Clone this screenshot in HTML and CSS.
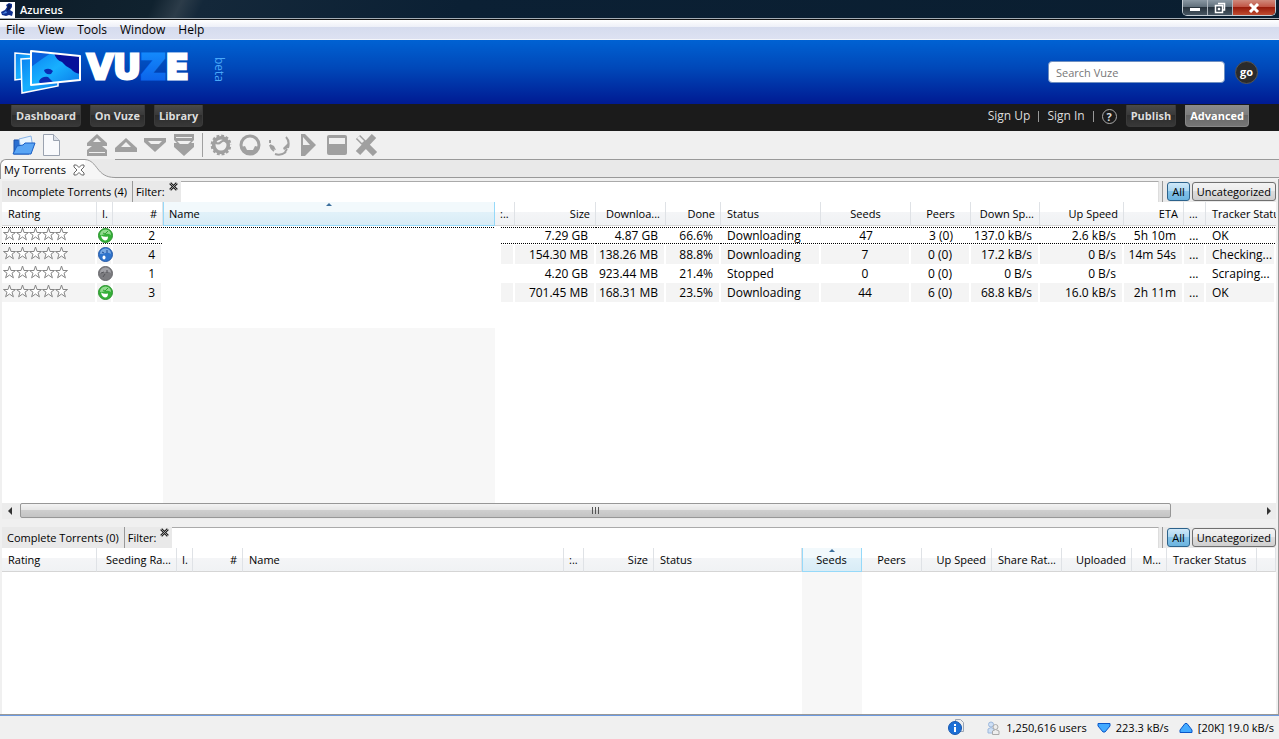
FILE: index.html
```html
<!DOCTYPE html>
<html lang="en">

<head>
    <meta charset="UTF-8">
    <meta name="viewport" content="width=device-width, initial-scale=1.0">
    <title>Azureus</title>
    <link rel="stylesheet" href="styles.css">
</head>
<body>
    <svg class="defs" width="0" height="0">
        <symbol id="star" viewBox="0 0 13 14"><path d="M6.500 1L8 5.500h4.500L9 8.200l1.400 4.600L6.500 10l-3.900 2.800L4 8.200.500 5.500H5z" fill="#fff" stroke="#858585"/></symbol>
        <symbol id="stars" viewBox="0 0 65 14">
            <use href="#star" width="13" height="14"/>
            <use href="#star" x="13" width="13" height="14"/>
            <use href="#star" x="26" width="13" height="14"/>
            <use href="#star" x="39" width="13" height="14"/>
            <use href="#star" x="52" width="13" height="14"/>
        </symbol>
        <symbol id="green" viewBox="0 0 15 15"><circle cx="7.500" cy="7.500" r="7" fill="#35b038" stroke="#2a932d"/><path d="M2 7q0-5 5.500-5.500Q13 2 13 7q-3-2-5.500-1T2 7z" fill="#93db90"/><path d="M5 5l2 1 3-3" fill="none" stroke="#2fa032"/><path d="M3 7.500q3 2 7 1 0 4-3 4-3-.500-4-5z" fill="#fff"/></symbol>
        <symbol id="blue" viewBox="0 0 15 15"><circle cx="7.500" cy="7.500" r="7" fill="#2f74cc" stroke="#2459a6"/><path d="M2 7q0-5 5.500-5.500Q13 2 13 7q-3-2-5.500-1T2 7z" fill="#79a9e2"/><path d="M4 5l2 1M9 6V3" stroke="#1c4d9a"/><ellipse cx="6" cy="10.500" rx="1.500" ry="2" fill="#fff"/></symbol>
        <symbol id="gray" viewBox="0 0 15 15"><circle cx="7.500" cy="7.500" r="7" fill="#7b7b7f" stroke="#68686c"/><path d="M2 7q0-5 5.500-5.500Q13 2 13 7q-3-2-5.500-1T2 7z" fill="#a3a3a8"/><path d="M3 7l3-1M9 7V4M5 11l2-3" stroke="#55555a"/></symbol>
        <symbol id="clear" viewBox="0 0 8 8"><path d="M1 1l6 6M7 1L1 7" stroke="#222" stroke-width="2.500"/><path d="M1 1l6 6M7 1L1 7" stroke="#aaa" stroke-width=".8"/></symbol>
    </svg>

    <header class="titlebar">
        <svg class="app-icon" viewBox="0 0 15 16"><path fill="#fff" d="M0 0h15v16H0z"/><path d="M6 3l3-2 3 1v3l-2 3 3 2-1 4-3-1-3 1-4-1-1-3 4-2 2-3z" fill="#10308f"/><path d="M8 2l3 1-1 4-3 2z" fill="#081850"/><path d="M2 12l4-3 1 2z" fill="#4b86e0"/></svg>
        <span class="title">Azureus</span>
        <div class="win-buttons">
            <button aria-label="Minimize"><svg width="12" height="10"><path d="M1 5h10v3H1z" fill="#fff"/></svg></button>
            <button aria-label="Restore"><svg width="12" height="12"><path d="M4 1.500h6.500V8H9M1.500 3.500h7v7h-7zM4.500 6.500h1v1h-1z" fill="none" stroke="#fff" stroke-width="1.500"/></svg></button>
            <button class="win-close" aria-label="Close"><svg width="12" height="10"><path d="M2 1l8 8M10 1L2 9" stroke="#fff" stroke-width="3"/></svg></button>
        </div>
    </header>

    <nav class="menu">
        <a href="#">File</a>
        <a href="#">View</a>
        <a href="#">Tools</a>
        <a href="#">Window</a>
        <a href="#">Help</a>
    </nav>

    <div class="banner">
        <svg class="logo" width="216" height="48" viewBox="0 0 216 48">
            <defs>
                <linearGradient id="glass" x1="0" y1="0" x2="1" y2="1"><stop offset="0" stop-color="#0a80f0"/><stop offset=".5" stop-color="#18b0ff"/><stop offset="1" stop-color="#0a78e8"/></linearGradient>
                <linearGradient id="zed" x1="0" y1="0" x2="0" y2="1"><stop offset="0" stop-color="#1591ff"/><stop offset="1" stop-color="#0a5be6"/></linearGradient>
            </defs>
            <path d="M1 5l22 2v22L1 32z" fill="url(#glass)" stroke="#fff" stroke-width="1.500"/>
            <path d="M7 11l37-2v29L8 45z" fill="url(#glass)" stroke="#fff" stroke-width="1.500"/>
            <path d="M17 3l49 5v24l-49 5z" fill="url(#glass)"/>
            <path d="M40 5l26 3v18q-6-1-9-5-6-3-9-7-6-2-8-9z" fill="#07109a"/>
            <path d="M17 3l20 2-9 6-11 8z" fill="#0860dc"/>
            <path d="M30 22q5-3 9 1l-2 3q-6 1-7-4zM25 33q3-5 9-4l5 5-13 2z" fill="#0a2cb4"/>
            <path d="M17 3l49 5v24l-49 5z" fill="none" stroke="#fff" stroke-width="2" stroke-linejoin="round"/>
            <text class="wordmark" x="73" y="31">VU<tspan fill="url(#zed)" stroke="url(#zed)">Z</tspan>E</text>
            <text class="beta" transform="translate(201 9) rotate(90)">beta</text>
        </svg>
        <form class="search">
            <input type="text" placeholder="Search Vuze" aria-label="Search Vuze">
            <button type="button">go</button>
        </form>
    </div>

    <nav class="nav">
        <button>Dashboard</button>
        <button>On Vuze</button>
        <button>Library</button>
        <div class="account">
            <a href="#">Sign Up</a>
            <i></i>
            <a href="#">Sign In</a>
            <i></i>
            <a class="help" href="#">?</a>
        </div>
        <button>Publish</button>
        <button class="active">Advanced</button>
    </nav>

    <div class="toolbar">
        <button aria-label="Open torrent"><svg width="24" height="22"><path d="M2 6h6l2 2h7v12H2z" fill="#2a6fd0" stroke="#1b4fa6"/><path d="M7 5l12-3 2 12-12 2z" fill="#eaf5ff" stroke="#8ab4e6"/><path d="M1 20l4-8 6-1 2-2h10l-4 11z" fill="#5aa5f4" stroke="#1b5fc4"/></svg></button>
        <button aria-label="New torrent"><svg width="24" height="22"><path d="M2.500.500h10l6 6v15h-16z" fill="#f8f9fc" stroke="#9aa2b0"/><path d="M12.500.500v6h6" fill="#dde2ea" stroke="#9aa2b0"/></svg></button>
        <span class="space"></span>
        <button disabled aria-label="Top"><svg width="24" height="22"><path d="M12 0l10 9v3H2V9z"/><path d="M12 8l10 8v6H2v-6z"/><path d="M8 8l4-4 4 4zM4 18h16v1H4z" fill="#f0f0f0"/></svg></button>
        <button disabled aria-label="Up"><svg width="24" height="22"><path d="M12 4l11 10v4H1v-4z"/><path d="M7 13l5-5 5 5z" fill="#f0f0f0"/></svg></button>
        <button disabled aria-label="Down"><svg width="24" height="22"><path d="M1 4h22v4L12 18 1 8z"/><path d="M5 7h14l-3 3H8z" fill="#f0f0f0"/></svg></button>
        <button disabled aria-label="Bottom"><svg width="24" height="22"><path d="M2 0h20v6l-3 3h3v4l-10 9-10-9V9h3L2 6z"/><path d="M4 3h16v1H4zM5 7h14l-3 3H8z" fill="#f0f0f0"/></svg></button>
        <span class="line"></span>
        <button disabled aria-label="Run"><svg width="24" height="22"><circle cx="12" cy="11" r="8" fill="none" stroke="#a0a0a0" stroke-width="5"/><circle cx="12" cy="11" r="10" fill="none" stroke="#f0f0f0" stroke-width="2" stroke-dasharray="2 3"/><path d="M6 8q3 3 6 0t6 1" fill="none" stroke="#a0a0a0" stroke-width="2"/></svg></button>
        <button disabled aria-label="Host"><svg width="24" height="22"><circle cx="12" cy="11" r="9" fill="none" stroke="#a0a0a0" stroke-width="3"/><path d="M3 13l4-1 2 4h6l2-4 4 1-3 6-5 2h-3l-4-2z"/></svg></button>
        <button disabled aria-label="Publish torrent"><svg width="24" height="22"><path d="M3 10l4 2 2 4-4-1zM21 9v5l-4 2-1-2z"/><path d="M3 11q1 4 4 6M8 20q6 2 11-2M19 3q4 4 2 11M3 6v3M20 15l-2 3" fill="none" stroke="#a0a0a0" stroke-width="2"/></svg></button>
        <button disabled aria-label="Start"><svg width="24" height="22"><path d="M5 0h4l11 11L9 22H5z"/><path d="M7 3l7 8H7z" fill="#f0f0f0"/></svg></button>
        <button disabled aria-label="Stop"><svg width="24" height="22"><rect x="2" y="1" width="20" height="20" rx="2"/><path d="M4 4h16v6H4z" fill="#f0f0f0"/></svg></button>
        <button disabled aria-label="Remove"><svg width="24" height="22"><path d="M4 3l17 17M20 2L4 19" stroke="#a0a0a0" stroke-width="6"/><path d="M4 3l5 5" stroke="#f0f0f0" stroke-width="3"/></svg></button>
    </div>

    <div class="tabs">
        <button class="tab">My Torrents <svg width="12" height="12"><path d="M1 1h2.500L6 3.500 8.500 1H11v2L8 6l3 3v2H8.500L6 8.500 3.500 11H1V9l3-3-3-3z" fill="#fff" stroke="#666"/></svg></button>
        <svg class="curve" width="30" height="20"><path d="M0 0h30v20H0z" fill="#f6f6f6"/><path d="M30 0H0c13 1 11 18 30 18.500z" fill="#e9e9e9"/><path d="M0 .500c13 1 11 18 30 18" fill="none" stroke="#999"/></svg>
        <span class="tab-rest"></span>
    </div>

    <main class="panes">
        <section class="pane incomplete">
            <div class="filter">
                <h2>Incomplete Torrents (4)</h2>
                <label for="filter1">Filter:</label>
                <button class="clear" aria-label="Clear"><svg width="9" height="9"><use href="#clear"/></svg></button>
                <input id="filter1" type="text">
                <div class="cats"><button class="on">All</button><button>Uncategorized</button></div>
            </div>
            <div class="scroll">
                <table>
                    <colgroup><col class="w95"><col class="w16"><col class="w50"><col class="w332"><col class="w20"><col class="w81"><col class="w70"><col class="w55"><col class="w100"><col class="w90"><col class="w60"><col class="w69"><col class="w84"><col class="w60"><col class="w22"><col></colgroup>
                    <thead>
                        <tr><th>Rating</th><th class="tiny">I.</th><th class="r">#</th><th class="sorted">Name</th><th class="tiny">:..</th><th class="r">Size</th><th class="r">Downloa...</th><th class="r">Done</th><th>Status</th><th class="c">Seeds</th><th class="c">Peers</th><th class="r">Down Sp...</th><th class="r">Up Speed</th><th class="r">ETA</th><th class="tiny">...</th><th class="last">Tracker Status</th></tr>
                    </thead>
                    <tbody>
                        <tr class="selected"><td class="rating"><svg width="65" height="14"><use href="#stars"/></svg></td><td class="ic"><svg width="15" height="15"><use href="#green"/></svg></td><td class="r">2</td><td class="name"></td><td class="cat"></td><td class="r">7.29 GB</td><td class="r">4.87 GB</td><td class="r">66.6%</td><td>Downloading</td><td class="c">47</td><td class="c">3 (0)</td><td class="r">137.0 kB/s</td><td class="r">2.6 kB/s</td><td class="r">5h 10m</td><td class="tiny">...</td><td>OK</td></tr>
                        <tr><td class="rating"><svg width="65" height="14"><use href="#stars"/></svg></td><td class="ic"><svg width="15" height="15"><use href="#blue"/></svg></td><td class="r">4</td><td class="name"></td><td class="cat"></td><td class="r">154.30 MB</td><td class="r">138.26 MB</td><td class="r">88.8%</td><td>Downloading</td><td class="c">7</td><td class="c">0 (0)</td><td class="r">17.2 kB/s</td><td class="r">0 B/s</td><td class="r">14m 54s</td><td class="tiny">...</td><td>Checking...</td></tr>
                        <tr><td class="rating"><svg width="65" height="14"><use href="#stars"/></svg></td><td class="ic"><svg width="15" height="15"><use href="#gray"/></svg></td><td class="r">1</td><td class="name"></td><td class="cat"></td><td class="r">4.20 GB</td><td class="r">923.44 MB</td><td class="r">21.4%</td><td>Stopped</td><td class="c">0</td><td class="c">0 (0)</td><td class="r">0 B/s</td><td class="r">0 B/s</td><td class="r"></td><td class="tiny">...</td><td>Scraping...</td></tr>
                        <tr><td class="rating"><svg width="65" height="14"><use href="#stars"/></svg></td><td class="ic"><svg width="15" height="15"><use href="#green"/></svg></td><td class="r">3</td><td class="name"></td><td class="cat"></td><td class="r">701.45 MB</td><td class="r">168.31 MB</td><td class="r">23.5%</td><td>Downloading</td><td class="c">44</td><td class="c">6 (0)</td><td class="r">68.8 kB/s</td><td class="r">16.0 kB/s</td><td class="r">2h 11m</td><td class="tiny">...</td><td>OK</td></tr>
                        <tr class="blank"><td colspan="16"></td></tr>
                        <tr class="rest"><td colspan="3"></td><td class="shade"></td><td colspan="12"></td></tr>
                    </tbody>
                </table>
            </div>
            <div class="hbar">
                <button aria-label="Scroll left"><svg width="18" height="16"><path d="M10 4v8L6 8z" fill="#333"/></svg></button>
                <div class="track"><div class="thumb"><i></i><i></i><i></i></div></div>
                <button aria-label="Scroll right"><svg width="18" height="16"><path d="M9 4v8l4-4z" fill="#333"/></svg></button>
            </div>
        </section>

        <section class="pane complete">
            <div class="filter">
                <h2>Complete Torrents (0)</h2>
                <label for="filter2">Filter:</label>
                <button class="clear" aria-label="Clear"><svg width="9" height="9"><use href="#clear"/></svg></button>
                <input id="filter2" type="text">
                <div class="cats"><button class="on">All</button><button>Uncategorized</button></div>
            </div>
            <div class="scroll">
                <table>
                    <colgroup><col class="w95"><col class="w80"><col class="w16"><col class="w50"><col class="w321"><col class="w20"><col class="w70"><col class="w148"><col class="w60"><col class="w60"><col class="w70"><col class="w70"><col class="w70"><col class="w35"><col class="w90"><col></colgroup>
                    <thead>
                        <tr><th>Rating</th><th class="r">Seeding Ra...</th><th class="tiny">I.</th><th class="r">#</th><th>Name</th><th class="tiny">:..</th><th class="r">Size</th><th>Status</th><th class="c sorted">Seeds</th><th class="c">Peers</th><th class="r">Up Speed</th><th class="r">Share Rat...</th><th class="r">Uploaded</th><th class="r">M...</th><th>Tracker Status</th><th></th></tr>
                    </thead>
                    <tbody>
                        <tr class="rest"><td colspan="8"></td><td class="shade"></td><td colspan="7"></td></tr>
                    </tbody>
                </table>
            </div>
        </section>
    </main>

    <footer class="status">
        <svg class="info" width="17" height="17"><path d="M7.500.500h5l3 3v9h-8z" fill="#eee" stroke="#9aa5b5"/><circle cx="7" cy="9" r="6.500" fill="#1c6fd6" stroke="#1858b0"/><path d="M6 5h2v2H6zM6 8h2v5H6z" fill="#fff"/></svg>
        <svg class="users" width="13" height="14"><circle cx="4" cy="3.500" r="2.500" fill="#cfe0f5" stroke="#9db8dc"/><path d="M1 12V8q3-3 6 0v4z" fill="#cfe0f5" stroke="#9db8dc"/><circle cx="8.500" cy="6" r="2.500" fill="#eee" stroke="#aaa"/><path d="M5.500 13.500V10q3-3 6.500 0v3.500z" fill="#eee" stroke="#aaa"/></svg>
        <span>1,250,616 users</span>
        <svg class="rate" width="14" height="12"><path d="M1 1.500h12V4l-5 6H6L1 4z" fill="#43aaff" stroke="#0a56c8"/></svg>
        <span>223.3 kB/s</span>
        <svg class="rate" width="14" height="12"><path d="M1 10.500V8l5-6.500h2L13 8v2.500z" fill="#43aaff" stroke="#0a56c8"/></svg>
        <span>[20K] 19.0 kB/s</span>
    </footer>
</body>
</html>
```
FILE: styles.css
```css
* {
    box-sizing: border-box;
}
body {
    margin: 0;
    height: 100vh;
    display: flex;
    flex-direction: column;
    overflow: hidden;
    background: #f0f0f0;
    color: #000;
    font: 12px/16px "Open Sans", "Noto Sans", sans-serif;
}
button,
input {
    margin: 0;
    padding: 0;
    border: 0;
    background: none;
    color: inherit;
    font: inherit;
}
a {
    color: inherit;
    text-decoration: none;
}
svg {
    display: block;
}
.defs {
    position: absolute;
}

/* window frame */
.titlebar {
    flex: none;
    display: flex;
    align-items: center;
    height: 20px;
    padding-right: 3px;
    border-bottom: 1px solid #111;
    box-shadow: inset 0 -1px #a4adb5;
    background: linear-gradient(115deg, #0d1c29 0, #10222f 140px, #2c3c49 165px, #14283a 185px, #0b2034 420px, #0a1e30 100%);
    color: #fff;
}
.app-icon {
    width: 15px;
    height: 16px;
}
.title {
    margin-left: 5px;
    font-size: 11px;
    font-weight: 600;
}
.win-buttons {
    display: flex;
    align-self: flex-start;
    height: 16px;
    margin-left: auto;
    border: 1px solid #c5cdd4;
    border-top: 0;
    border-radius: 0 0 5px 5px;
    overflow: hidden;
}
.win-buttons button {
    display: flex;
    align-items: center;
    justify-content: center;
    width: 25px;
    border-right: 1px solid #b0b8bf;
    background: linear-gradient(#8a98a3, #5d6c78 50%, #27333d 50%, #485662);
}
.win-buttons .win-close {
    width: 42px;
    border: 0;
    background: linear-gradient(#d08a7c, #c05040 50%, #981c0c 50%, #c04c30);
}
.menu {
    flex: none;
    display: flex;
    gap: 13px;
    height: 20px;
    padding: 2px 6px;
    border-bottom: 1px solid #f4f6fb;
    background: linear-gradient(#fff, #eef0f8 35%, #d5dbee 35%, #dde2f2);
}

/* banner */
.banner {
    flex: none;
    display: flex;
    align-items: center;
    justify-content: space-between;
    height: 64px;
    padding: 0 21px 0 14px;
    background: linear-gradient(#0062d3, #0047b8 45%, #001a92);
}
.wordmark {
    fill: #fff;
    stroke: #fff;
    stroke-width: 3px;
    font: bold 34px "DejaVu Sans", sans-serif;
}
.beta {
    fill: #4aa8f8;
    font: 12px "Open Sans", sans-serif;
}
.search {
    display: flex;
    align-items: center;
    gap: 10px;
}
.search input {
    width: 177px;
    height: 22px;
    padding: 0 7px;
    border: 1px solid #6f8fc0;
    border-radius: 4px;
    background: #fff;
    font-size: 11px;
}
.search input::placeholder {
    color: #777;
}
.search button {
    width: 23px;
    height: 23px;
    border: 1px solid #555;
    border-radius: 50%;
    background: #2b2b2b;
    color: #fff;
    font-size: 11px;
    font-weight: bold;
    line-height: 16px;
}
.nav {
    flex: none;
    display: flex;
    gap: 9px;
    height: 27px;
    padding: 1px 30px 4px 11px;
    background: #1b1b1b;
    color: #ddd;
}
.nav button {
    padding: 0 4px;
    border: 1px solid #3a3a3a;
    border-top: 0;
    border-radius: 0 0 4px 4px;
    background: linear-gradient(#4a4a4a, #383838 50%, #2c2c2c 50%, #383838);
    font-size: 11px;
    font-weight: bold;
}
.nav .active {
    border-color: #888;
    background: linear-gradient(#8c8c8c, #7c7c7c 50%, #686868 50%, #767676);
    color: #fff;
}
.account {
    display: flex;
    align-items: center;
    gap: 8px;
    margin-left: auto;
}
.account i {
    width: 1px;
    height: 11px;
    background: #999;
}
.account .help {
    width: 15px;
    height: 15px;
    border: 1px solid #aaa;
    border-radius: 50%;
    font-size: 11px;
    font-weight: bold;
    line-height: 13px;
    text-align: center;
}

/* toolbar and tabs */
.toolbar {
    flex: none;
    display: flex;
    align-items: center;
    gap: 5px;
    height: 28px;
    padding-left: 12px;
}
.toolbar svg {
    fill: #a0a0a0;
}
.toolbar .space {
    width: 10px;
}
.toolbar .line {
    width: 1px;
    height: 24px;
    margin: 0 1px;
    background: #a0a0a0;
}
.tabs {
    flex: none;
    display: flex;
    height: 20px;
}
.tab {
    display: flex;
    align-items: center;
    gap: 7px;
    padding-left: 3px;
    border-top: 1px solid #999;
    border-left: 1px solid #999;
    border-radius: 6px 0 0;
    background: linear-gradient(#fff, #f4f4f4);
    font-size: 11px;
}
.tab-rest {
    flex: 1;
    height: 19px;
    border-top: 1px solid #999;
    border-bottom: 1px solid #999;
    background: #e9e9e9;
}
.curve {
    border-top: 0;
}

/* torrent lists */
.panes {
    flex: 1;
    min-height: 0;
    display: flex;
    flex-direction: column;
    padding: 2px 2px 0;
    border-right: 1px solid #999;
    border-bottom: 1px solid #999;
}
.pane {
    min-height: 0;
    display: flex;
    flex-direction: column;
}
.incomplete {
    flex: 65;
}
.complete {
    flex: 35;
}
.filter {
    flex: none;
    display: flex;
    height: 21px;
    background: #e9e9e9;
    font-size: 11px;
}
.filter h2 {
    margin: 0;
    padding: 3px 5px 0;
    border-right: 1px solid #999;
    font-size: 11px;
    font-weight: normal;
}
.filter label {
    padding: 3px 4px 0 3px;
}
.clear {
    align-self: flex-start;
    padding-top: 1px;
}
.filter input {
    flex: 1;
    margin-left: 3px;
    border-top: 1px solid #aaa;
    border-right: 1px solid #ddd;
    background: #fff;
}
.cats {
    display: flex;
    gap: 2px;
    margin-left: 3px;
    padding: 1px 0 1px 4px;
    border-left: 1px solid #999;
}
.cats button {
    padding: 0 4px;
    border: 1px solid #707070;
    border-radius: 3px;
    background: linear-gradient(#f3f3f3, #ebebeb 50%, #dddddd 50%, #cfcfcf);
    line-height: 17px;
}
.cats .on {
    border-color: #2c628b;
    background: linear-gradient(#cfe8f8, #a8d5f0 50%, #84c2e8 50%, #6bb4df);
}
.scroll {
    flex: 1;
    min-height: 0;
    overflow: hidden;
    background: #fff;
}
table {
    width: 100%;
    height: 100%;
    table-layout: fixed;
    border-collapse: separate;
    border-spacing: 0;
}
th,
td {
    padding: 0 6px;
    overflow: hidden;
    font-weight: normal;
    text-align: left;
    white-space: nowrap;
}
th {
    position: relative;
    height: 24px;
    border-right: 1px solid #dfe2e6;
    border-bottom: 1px solid #d5d5d5;
    background: linear-gradient(#fff 45%, #f4f5f7 45%, #f0f2f4);
    font-size: 11px;
}
th.sorted {
    border-right-color: #96d9f9;
    border-bottom-color: #96d9f9;
    box-shadow: inset 1px 0 #96d9f9;
    background: linear-gradient(#f2f9fc 45%, #e1f1f9 45%, #d8ecf6);
}
th.last {
    padding-right: 0;
    border-right: 0;
}
.sorted::before {
    content: "";
    position: absolute;
    top: 1px;
    left: calc(50% - 3px);
    border: solid transparent;
    border-width: 0 3px 3px;
    border-bottom-color: #3c6f9c;
}
td {
    height: 19px;
    border-right: 2px solid #fff;
    line-height: 16px;
}
tr:nth-child(even) td {
    background: #f4f4f4;
}
.r {
    text-align: right;
}
.c {
    text-align: center;
}
th.r {
    padding: 0 5px 0 0;
}
td.r {
    padding: 0 6px 0 0;
}
th.tiny,
td.tiny {
    padding: 0 0 0 5px;
}
td.ic {
    padding: 0 0 0 1px;
    overflow: visible;
}
td.rating {
    padding: 0 0 3px 1px;
}
tr td.name {
    background: #fff;
}
tr td.cat {
    box-shadow: inset 6px 0 #fff;
}
.selected td {
    background: linear-gradient(90deg, #000 50%, transparent 50%) 0 1px / 2px 1px repeat-x, linear-gradient(90deg, #000 50%, transparent 50%) 0 17px / 2px 1px repeat-x;
    border-right: 0;
}
.selected td.r {
    padding-right: 8px;
}
.selected td.name {
    background: linear-gradient(90deg, #000 50%, transparent 50%) 0 1px / 2px 1px repeat-x;
}
.blank td {
    height: 26px;
}
.rest td,
.rest:nth-child(even) td {
    height: auto;
    border: 0;
    background: none;
}
.rest:nth-child(n) .shade {
    background: #f7f7f7;
}
.w16 { width: 16px; }
.w20 { width: 20px; }
.w22 { width: 22px; }
.w35 { width: 35px; }
.w50 { width: 50px; }
.w55 { width: 55px; }
.w60 { width: 60px; }
.w69 { width: 69px; }
.w70 { width: 70px; }
.w80 { width: 80px; }
.w81 { width: 81px; }
.w84 { width: 84px; }
.w90 { width: 90px; }
.w95 { width: 95px; }
.w100 { width: 100px; }
.w148 { width: 148px; }
.w321 { width: 321px; }
.w332 { width: 332px; }

.hbar {
    flex: none;
    display: flex;
    height: 16px;
    margin-bottom: 8px;
    background: #ececec;
}
.track {
    flex: 1;
}
.thumb {
    display: flex;
    align-items: center;
    justify-content: center;
    gap: 2px;
    width: 93%;
    height: 15px;
    border: 1px solid #979797;
    border-radius: 2px;
    background: linear-gradient(#f3f3f3, #e6e6e6 45%, #cfcfcf 45%, #c4c4c4);
}
.thumb i {
    width: 1px;
    height: 7px;
    background: #555;
}

.status {
    flex: none;
    display: flex;
    align-items: center;
    justify-content: flex-end;
    height: 24px;
    padding-right: 5px;
    border-top: 1px solid #6d9be0;
    background: #f0f0f0;
    font-size: 11px;
}
.users {
    margin: 0 6px 0 22px;
}
.rate {
    margin: 0 5px 0 10px;
}
```
